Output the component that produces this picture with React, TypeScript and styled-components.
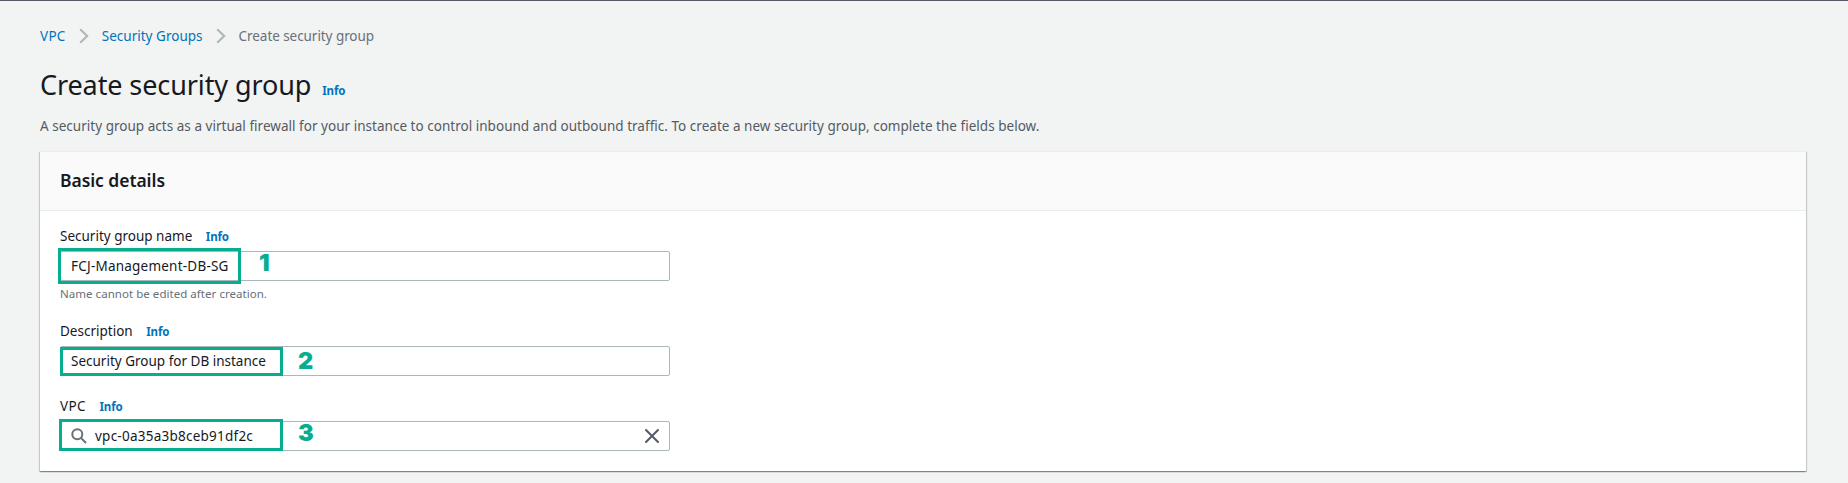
import React from "react";
import styled, { createGlobalStyle } from "styled-components";

const GlobalStyle = createGlobalStyle`
  * { box-sizing: border-box; }
  body {
    margin: 0;
    background: #f2f3f3;
    font-family: "Noto Sans", "Open Sans", sans-serif;
    font-size: 13.5px;
    line-height: 22px;
    color: #16191f;
    overflow: hidden;
  }
`;

const Page = styled.main`
  display: flex;
  flex-direction: column;
  height: 483px;
  padding: 24px 42px 0 40px;
  border-top: 1px solid #545b64;
  white-space: nowrap;
`;

const Breadcrumbs = styled.nav`
  display: flex;
  align-items: center;
  height: 22px;
`;

const Crumb = styled.a<{ $tracking?: number }>`
  color: #0073bb;
  letter-spacing: ${(p) => p.$tracking ?? 0}px;
`;

const CurrentCrumb = styled.span`
  color: #687078;
  letter-spacing: -0.06px;
`;

const Chevron = styled.svg`
  flex: none;
  width: 10px;
  height: 16px;
  margin: 0 13px;
  fill: none;
  stroke: #aab7b8;
  stroke-width: 2;
`;

const TitleRow = styled.header`
  display: flex;
  align-items: baseline;
  height: 36px;
  margin-top: 20px;
`;

const Title = styled.h1`
  margin: 0 11px 0 0;
  font-size: 27px;
  line-height: 36px;
  font-weight: 400;
  letter-spacing: -0.1px;
`;

const InfoLink = styled.a`
  font-size: 11.5px;
  line-height: 16px;
  font-weight: 700;
  color: #0073bb;
  letter-spacing: -0.1px;
`;

const Intro = styled.p`
  margin: 12px 0 14px;
  color: #545b64;
  letter-spacing: 0.025px;
`;

const Card = styled.section`
  height: 320px;
  background: #fff;
  border-top: 1px solid #eaeded;
  box-shadow: 0 1px 1px 0 rgba(0, 28, 36, 0.3), 1px 1px 1px 0 rgba(0, 28, 36, 0.15),
    -1px 1px 1px 0 rgba(0, 28, 36, 0.15);
`;

const CardHeader = styled.div`
  height: 59px;
  padding: 17px 20px;
  background: #fafafa;
  border-bottom: 1px solid #eaeded;
`;

const CardTitle = styled.h2`
  margin: 0;
  font-size: 17.5px;
  line-height: 22px;
  font-weight: 600;
  letter-spacing: -0.06px;
`;

const Form = styled.div`
  display: flex;
  flex-direction: column;
  gap: 19px;
  width: 650px;
  padding: 14px 20px 20px;
`;

const LabelRow = styled.div`
  display: flex;
  align-items: baseline;
  gap: 13.5px;
  height: 22px;
  margin-bottom: 4px;
`;

const Label = styled.label<{ $tracking?: number }>`
  letter-spacing: ${(p) => p.$tracking ?? 0}px;
`;

const InputBox = styled.div`
  position: relative;
  display: flex;
  align-items: center;
  width: 610px;
  height: 30px;
  padding: 0 10px;
  border: 1px solid #aab7b8;
  border-radius: 2px;
  background: #fff;
`;

const Value = styled.span<{ $tracking?: number }>`
  letter-spacing: ${(p) => p.$tracking ?? 0}px;
`;

const Hint = styled.div`
  margin-top: 5px;
  font-size: 11.5px;
  line-height: 15px;
  color: #687078;
  letter-spacing: 0.04px;
`;

const SearchIcon = styled.svg`
  width: 16px;
  height: 16px;
  margin-left: -0.5px;
  margin-right: 8.5px;
  fill: none;
  stroke: #687078;
  stroke-width: 2;
`;

const ClearIcon = styled.svg`
  width: 16px;
  height: 16px;
  margin-left: auto;
  margin-right: -1px;
  fill: none;
  stroke: #545b64;
  stroke-width: 2;
  stroke-linecap: round;
`;

/* Step annotations laid over the inputs */
const Highlight = styled.span<{ $x: number; $y: number; $w: number; $h: number }>`
  position: absolute;
  left: ${(p) => p.$x}px;
  top: ${(p) => p.$y}px;
  width: ${(p) => p.$w}px;
  height: ${(p) => p.$h}px;
  border: 3px solid #06ae8f;
`;

const StepNumber = styled.span<{ $x: number; $y: number }>`
  position: absolute;
  left: ${(p) => p.$x}px;
  top: ${(p) => p.$y}px;
  font-family: Inter, sans-serif;
  font-size: 23.5px;
  line-height: 24px;
  font-weight: 900;
  color: #06ae8f;
  -webkit-text-stroke: 4px #fff;
  paint-order: stroke fill;
`;

const Separator = () => (
  <Chevron viewBox="0 0 10 16">
    <path d="M1.2 1.2 8.2 8 1.2 14.8" />
  </Chevron>
);

export default function App() {
  return (
    <>
      <GlobalStyle />
      <Page>
        <Breadcrumbs>
          <Crumb $tracking={0.3}>VPC</Crumb>
          <Separator />
          <Crumb $tracking={0.02}>Security Groups</Crumb>
          <Separator />
          <CurrentCrumb>Create security group</CurrentCrumb>
        </Breadcrumbs>
        <TitleRow>
          <Title>Create security group</Title>
          <InfoLink>Info</InfoLink>
        </TitleRow>
        <Intro>
          A security group acts as a virtual firewall for your instance to control inbound and outbound
          traffic. To create a new security group, complete the fields below.
        </Intro>
        <Card>
          <CardHeader>
            <CardTitle>Basic details</CardTitle>
          </CardHeader>
          <Form>
            <div>
              <LabelRow>
                <Label>Security group name</Label>
                <InfoLink>Info</InfoLink>
              </LabelRow>
              <InputBox>
                <Value $tracking={0.22}>FCJ-Management-DB-SG</Value>
                <Highlight $x={-3} $y={-4} $w={183} $h={36} />
                <StepNumber $x={198} $y={-1}>1</StepNumber>
              </InputBox>
              <Hint>Name cannot be edited after creation.</Hint>
            </div>
            <div>
              <LabelRow>
                <Label>Description</Label>
                <InfoLink>Info</InfoLink>
              </LabelRow>
              <InputBox>
                <Value>Security Group for DB instance</Value>
                <Highlight $x={-1} $y={0} $w={223} $h={29} />
                <StepNumber $x={237} $y={2}>2</StepNumber>
              </InputBox>
            </div>
            <div>
              <LabelRow>
                <Label $tracking={0.4}>VPC</Label>
                <InfoLink>Info</InfoLink>
              </LabelRow>
              <InputBox>
                <SearchIcon viewBox="0 0 16 16">
                  <circle cx="6.3" cy="6.3" r="5" />
                  <path d="M9.9 9.9 15 15" />
                </SearchIcon>
                <Value $tracking={0.24}>vpc-0a35a3b8ceb91df2c</Value>
                <ClearIcon viewBox="0 0 16 16">
                  <path d="M2 2 14 14M14 2 2 14" />
                </ClearIcon>
                <Highlight $x={-2} $y={-3} $w={224} $h={32} />
                <StepNumber $x={237} $y={-1}>3</StepNumber>
              </InputBox>
            </div>
          </Form>
        </Card>
      </Page>
    </>
  );
}
